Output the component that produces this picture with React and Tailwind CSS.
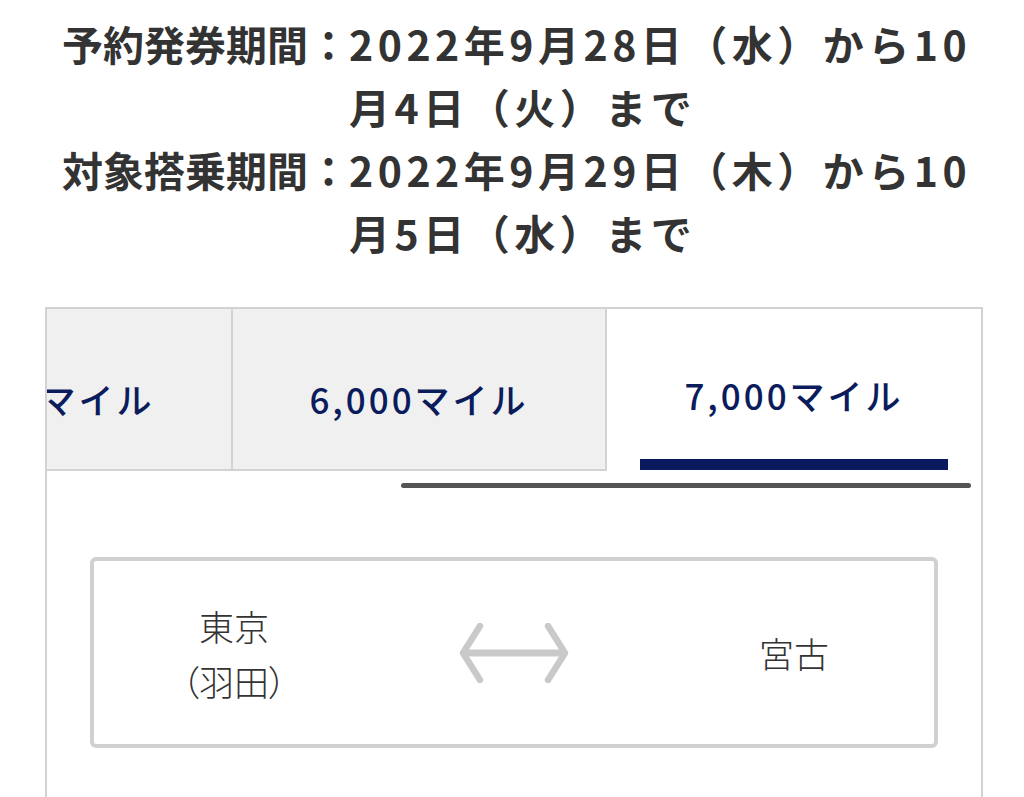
import React from 'react';

const periods = [
  { label: '予約発券期間：', value: '2022年9月28日（水）から10月4日（火）まで' },
  { label: '対象搭乗期間：', value: '2022年9月29日（木）から10月5日（水）まで' },
];

const tabs = [
  { label: '5,000マイル', active: false },
  { label: '6,000マイル', active: false },
  { label: '7,000マイル', active: true },
];

const SwapArrow = () => (
  <svg width="112" height="60" viewBox="0 0 112 60" fill="none">
    <path d="M6 30 H106" stroke="#c9c9c9" strokeWidth="7" strokeLinecap="round" />
    <path d="M22 3 L5 30 L22 57" stroke="#c9c9c9" strokeWidth="6.5" strokeLinecap="round" strokeLinejoin="round" />
    <path d="M90 3 L107 30 L90 57" stroke="#c9c9c9" strokeWidth="6.5" strokeLinecap="round" strokeLinejoin="round" />
  </svg>
);

export default function App() {
  return (
    <div className="w-[1024px] h-[797px] overflow-hidden bg-white font-['Noto_Sans_CJK_JP',sans-serif]">
      {/* Periods */}
      <div className="pt-[12px] pl-[62px] text-[41px] leading-[63px] font-bold text-[#333]">
        {periods.map((p) => (
          <div key={p.label} className="grid grid-cols-[max-content_645px]">
            <div>{p.label}</div>
            <div className="tracking-[4.5px]">{p.value}</div>
          </div>
        ))}
      </div>

      {/* Mileage tabs (strip scrolled so the first tab is partly hidden) */}
      <div className="mt-[43px] ml-[45px] w-[938px] h-[500px] border-2 border-b-0 border-[#d2d2d2]">
        <div className="overflow-hidden">
          <div className="flex -ml-[188px]">
            {tabs.map((t) =>
              t.active ? (
                <div key={t.label} className="w-[374px] shrink-0 h-[162px] bg-white flex flex-col">
                  <div className="flex-1 flex items-center justify-center pt-[22px] text-[35px] tracking-[3px] font-medium text-[#0b1c5c]">
                    {t.label}
                  </div>
                  <div className="mx-[33px] mb-[1px] h-[11px] bg-[#0b1a5e]"></div>
                </div>
              ) : (
                <div
                  key={t.label}
                  className="w-[374px] shrink-0 h-[162px] bg-[#f0f0f0] border-r-2 border-b-2 border-[#d2d2d2] flex items-center justify-center pt-[20px] text-[35px] tracking-[3px] font-medium text-[#0b1c5c]"
                >
                  {t.label}
                </div>
              )
            )}
          </div>
        </div>

        <div className="mt-[12px] ml-[354px] w-[570px] h-[5px] rounded-full bg-[#555]"></div>

        {/* Route card */}
        <div className="mt-[69px] mx-[43px] h-[191px] border-4 border-[#d0d0d0] rounded-[6px] grid grid-cols-3 items-center text-[35px] leading-[55px] text-[#333] font-light">
          <div className="text-center [font-feature-settings:'palt']">
            <div>東京</div>
            <div>（羽田）</div>
          </div>
          <div className="flex justify-center">
            <SwapArrow />
          </div>
          <div className="text-center">宮古</div>
        </div>
      </div>
    </div>
  );
}
